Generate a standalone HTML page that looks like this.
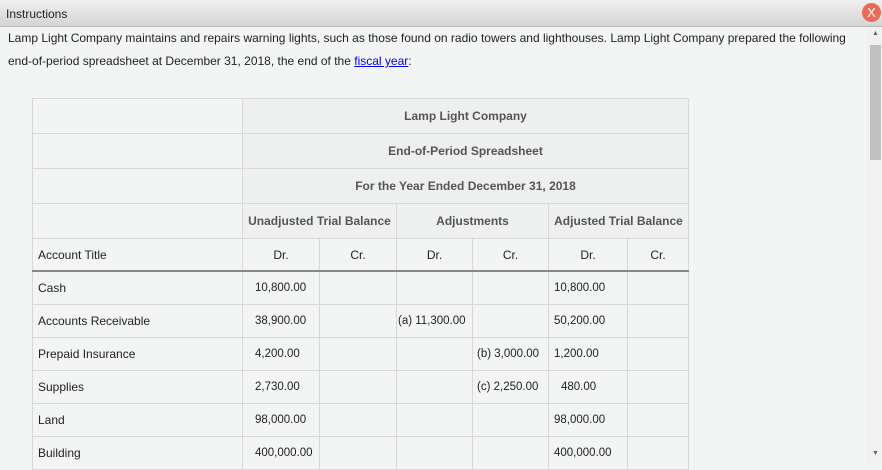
<!DOCTYPE html>
<html><head><style>
body{margin:0;width:882px;height:463px;overflow:hidden;background:#f3f4f4;font-family:"Liberation Sans",Arial,sans-serif;font-size:12px;color:#222;position:relative}
#bar{position:absolute;left:0;top:0;width:882px;height:26px;background:linear-gradient(#f0f0f0,#d4d4d4);border-bottom:1px solid #bbb}
#bar span{position:absolute;left:6px;top:7px;font-size:12px;color:#222}
#x{position:absolute;left:862px;top:3px;width:19px;height:19px;border-radius:50%;background:#ea6a5a;color:#fff;font-size:13px;text-align:center;line-height:19px}
#sb{position:absolute;left:866px;top:27px;width:16px;height:436px;background:#f1f1f1}
#thumb{position:absolute;left:870px;top:45px;width:11px;height:115px;background:#c1c1c1}
.ar{position:absolute;left:872px;font-size:7px;color:#666}
p{position:absolute;left:8px;margin:0;font-size:12px;color:#222}
a{color:#00e}
table{position:absolute;left:32px;top:98px;border-collapse:collapse;table-layout:fixed}
td{border:1px solid #d8d8d8;height:32px;padding:0;text-align:center;font-size:12px;color:#222}
td.h{background:#eeefef;font-weight:bold;color:#555;height:34px}
td.l{text-align:left;padding-left:5px}
td.n{text-align:left;padding-left:12px;font-size:11.5px}
td.m{text-align:left;padding-left:5px;font-size:11.5px}
tr.thick td{border-bottom:2px solid #888;height:31px}
</style></head><body>
<div id="bar"><span>Instructions</span></div><div id="x">X</div>
<div id="sb"></div><div id="thumb"></div><div class="ar" style="top:30px">▲</div><div class="ar" style="top:450px">▼</div>
<p style="top:31px">Lamp Light Company maintains and repairs warning lights, such as those found on radio towers and lighthouses. Lamp Light Company prepared the following</p>
<p style="top:54px">end-of-period spreadsheet at December 31, 2018, the end of the <a href="#">fiscal year</a>:</p>
<table>
<colgroup><col style="width:210px"><col style="width:77px"><col style="width:77px"><col style="width:76px"><col style="width:76px"><col style="width:79px"><col style="width:61px"></colgroup>
<tr><td></td><td class="h" colspan="6">Lamp Light Company</td></tr>
<tr><td></td><td class="h" colspan="6">End-of-Period Spreadsheet</td></tr>
<tr><td></td><td class="h" colspan="6">For the Year Ended December 31, 2018</td></tr>
<tr><td></td><td class="h" colspan="2">Unadjusted Trial Balance</td><td class="h" colspan="2">Adjustments</td><td class="h" colspan="2">Adjusted Trial Balance</td></tr>
<tr class="thick"><td class="l">Account Title</td><td>Dr.</td><td>Cr.</td><td>Dr.</td><td>Cr.</td><td>Dr.</td><td>Cr.</td></tr>
<tr><td class="l">Cash</td><td class="n">10,800.00</td><td></td><td></td><td></td><td class="m">10,800.00</td><td></td></tr>
<tr><td class="l">Accounts Receivable</td><td class="n">38,900.00</td><td></td><td class="l" style="padding-left:1px;font-size:11.5px">(a) 11,300.00</td><td></td><td class="m">50,200.00</td><td></td></tr>
<tr><td class="l">Prepaid Insurance</td><td class="n">4,200.00</td><td></td><td></td><td class="l" style="padding-left:4px;font-size:11.5px">(b) 3,000.00</td><td class="m">1,200.00</td><td></td></tr>
<tr><td class="l">Supplies</td><td class="n">2,730.00</td><td></td><td></td><td class="l" style="padding-left:4px;font-size:11.5px">(c) 2,250.00</td><td class="m" style="padding-left:12px">480.00</td><td></td></tr>
<tr><td class="l">Land</td><td class="n">98,000.00</td><td></td><td></td><td></td><td class="m">98,000.00</td><td></td></tr>
<tr><td class="l">Building</td><td class="n">400,000.00</td><td></td><td></td><td></td><td class="m">400,000.00</td><td></td></tr>
</table>
</body></html>
